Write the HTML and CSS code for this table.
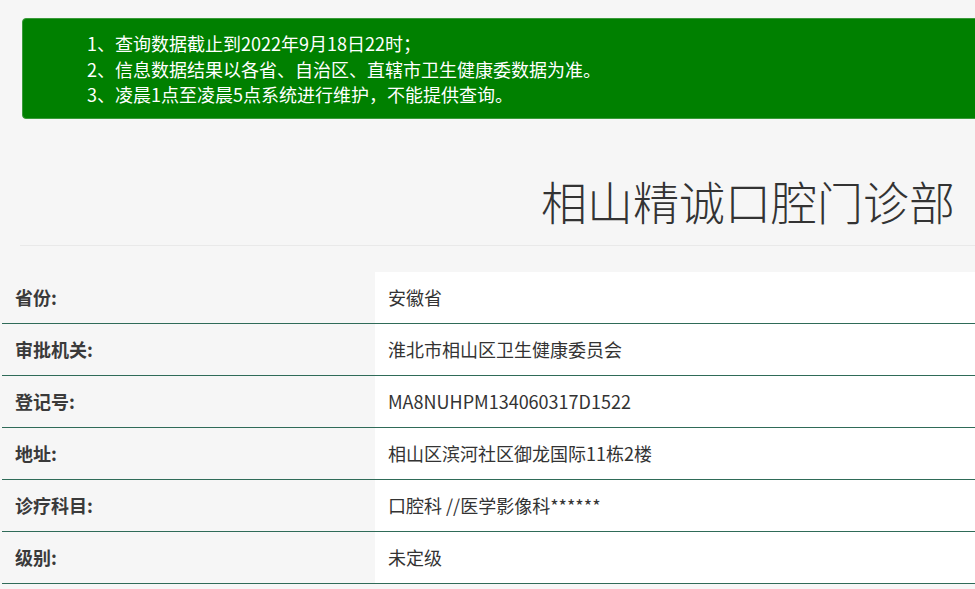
FILE: index.html
```html
<!DOCTYPE html>
<html lang="zh-CN">
<head>
<meta charset="utf-8">
<title>相山精诚口腔门诊部</title>
<link rel="stylesheet" href="styles.css">
</head>
<body>
<div class="page">
  <div class="notice">
    <p>1、查询数据截止到2022年9月18日22时；</p>
    <p>2、信息数据结果以各省、自治区、直辖市卫生健康委数据为准。</p>
    <p>3、凌晨1点至凌晨5点系统进行维护，不能提供查询。</p>
  </div>
  <div class="header">
    <h1 class="title">相山精诚口腔门诊部</h1>
  </div>
  <div class="info">
    <div class="row"><div class="label">省份:</div><div class="value">安徽省</div></div>
    <div class="row"><div class="label">审批机关:</div><div class="value">淮北市相山区卫生健康委员会</div></div>
    <div class="row"><div class="label">登记号:</div><div class="value">MA8NUHPM134060317D1522</div></div>
    <div class="row"><div class="label">地址:</div><div class="value">相山区滨河社区御龙国际11栋2楼</div></div>
    <div class="row"><div class="label">诊疗科目:</div><div class="value">口腔科 //医学影像科******</div></div>
    <div class="row"><div class="label">级别:</div><div class="value">未定级</div></div>
  </div>
</div>
</body>
</html>
```

FILE: styles.css
```css
html, body {
  margin: 0;
  padding: 0;
  background: #f6f6f6;
  overflow: hidden;
}
body {
  font-family: "Noto Sans CJK SC", "Noto Sans", sans-serif;
  color: #333;
}
.page {
  width: 1010px;
}
.notice {
  margin: 18px 0 0 22px;
  background: #008000;
  border: 1px solid #3a9a3a;
  border-radius: 4px;
  padding: 12px 0 10px 64px;
  color: #fff;
  font-size: 18px;
  line-height: 25.5px;
}
.notice p {
  margin: 0;
}
.header {
  margin: 49px 0 0 20px;
  border-bottom: 1px solid #e9e9e9;
  padding: 0 55px 13px 0;
  text-align: right;
}
.title {
  margin: 0;
  font-size: 46px;
  font-weight: 300;
  line-height: 64px;
  color: #333;
}
.info {
  margin: 26px 0 0 2px;
}
.row {
  display: grid;
  grid-template-columns: 373px 1fr;
  border-bottom: 1px solid #2f6b58;
  font-size: 18px;
}
.label {
  background: #f6f6f6;
  font-weight: bold;
  padding-left: 13px;
  height: 51px;
  display: flex;
  align-items: center;
  color: #3a3a3a;
}
.value {
  background: #fff;
  padding-left: 13px;
  display: flex;
  align-items: center;
  color: #333;
}
```
